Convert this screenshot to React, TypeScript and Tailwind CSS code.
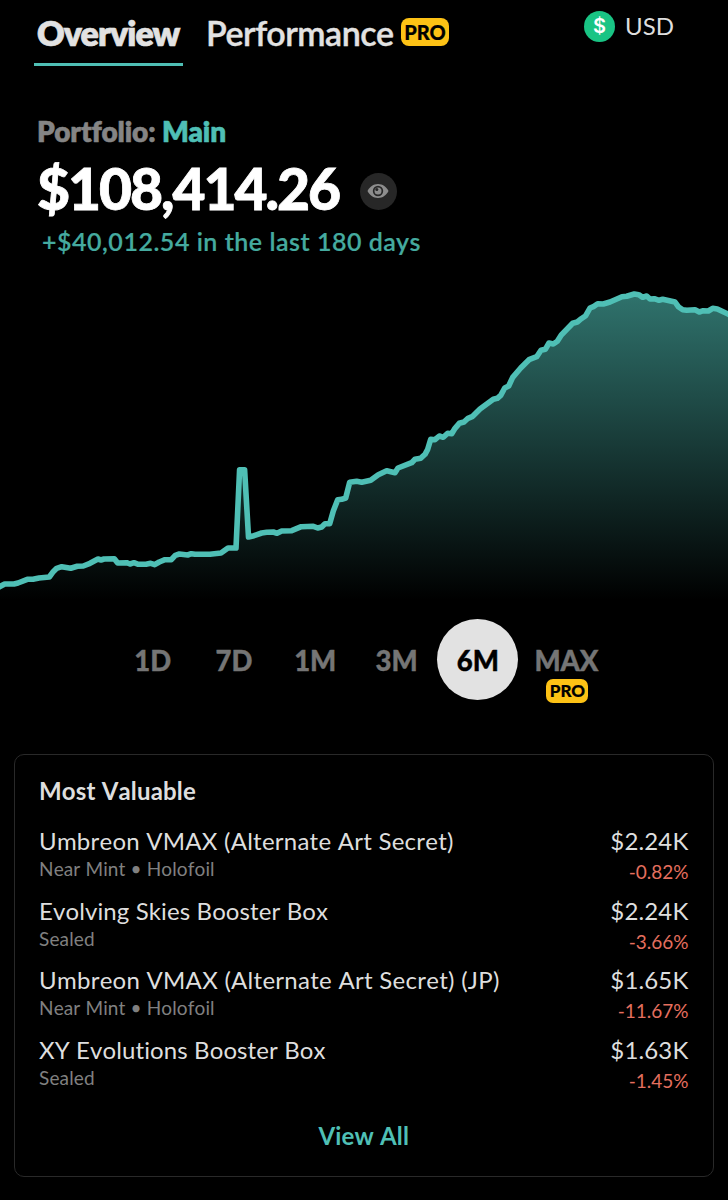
import clsx from "clsx"

type Point = [number, number]

const RANGES = ["1D", "7D", "1M", "3M", "6M", "MAX"]

const ITEMS = [
  { name: "Umbreon VMAX (Alternate Art Secret)", info: "Near Mint • Holofoil", price: "$2.24K", change: "-0.82%", spacing: "tracking-[0.240px]" },
  { name: "Evolving Skies Booster Box", info: "Sealed", price: "$2.24K", change: "-3.66%", spacing: "tracking-[0.110px]" },
  { name: "Umbreon VMAX (Alternate Art Secret) (JP)", info: "Near Mint • Holofoil", price: "$1.65K", change: "-11.67%", spacing: "tracking-[0.270px]" },
  { name: "XY Evolutions Booster Box", info: "Sealed", price: "$1.63K", change: "-1.45%", spacing: "tracking-[0.110px]" },
]

// Portfolio value over the last 180 days, in chart units
const POINTS: Point[] = [
  [-3, 308], [0, 306.5], [4.7, 304], [14, 304], [18, 303], [27.3, 299.3], [33, 299.3], [39, 298], [49.3, 297],
  [52.7, 292.3], [56.7, 288.3], [61.7, 286.7], [70.7, 288.3], [77.3, 286.3], [83.3, 286], [90, 283.3], [98, 279],
  [101, 280], [104, 279], [114.3, 278.7], [117.7, 283], [126.7, 282.7], [130, 284], [134, 282.7], [138.3, 284.3],
  [146, 284.3], [150.7, 283.3], [154.7, 284.7], [159.3, 282], [165, 279.7], [171.3, 279.7], [175.3, 275.3],
  [179.3, 274], [187.7, 275], [191.3, 273.7], [195, 274.3], [210, 274.3], [221, 273], [228, 268], [236, 268],
  [239.6, 189.7], [244.6, 189.7], [248.5, 257], [254, 255.7], [261.7, 253], [266.7, 252.3], [273.3, 252],
  [277, 253.3], [281.7, 251], [291.7, 250.7], [301.3, 246.7], [313.3, 246.3], [317.7, 248], [321.7, 247],
  [325, 243.7], [329.7, 243.7], [333.3, 231], [337.7, 219.7], [341.7, 219.3], [345.7, 218], [349.7, 202.3],
  [356.7, 201.3], [361.7, 202.3], [370.7, 200.3], [378.3, 194.7], [386.7, 190.7], [395, 192.7], [398, 188],
  [411.7, 182.7], [415, 179.3], [420.7, 178.3], [425, 174.3], [427.7, 169.3], [430.7, 159.3], [435, 159.7],
  [439.3, 156], [443.3, 157.3], [447.7, 153.3], [451.7, 153.7], [455, 148.3], [459.3, 143.3], [464, 142],
  [468, 138.3], [472.7, 136.3], [480, 129], [493.3, 119.3], [497.3, 118.3], [500.7, 115.3], [504.7, 108],
  [508.7, 106], [512.7, 97.3], [520.7, 88], [529, 79.7], [536.7, 76.7], [541, 70.3], [545.3, 69.3], [549, 63],
  [553.3, 64], [557.3, 61.3], [561.3, 55], [572.7, 43.3], [577.3, 42], [581.3, 38.7], [585.7, 35.7], [590, 28],
  [594, 26.3], [597.7, 23.7], [603.3, 24], [610, 22], [622, 16.7], [626.7, 16.3], [634.3, 14], [638.7, 14.7],
  [642.7, 17.3], [646.7, 16], [650, 19], [654.3, 18.7], [659, 20.3], [662.7, 19.3], [675, 22], [678.3, 26.7],
  [682.7, 29.7], [686.7, 30.3], [695, 29.7], [699.3, 32], [703.3, 30.7], [708.3, 31], [712.7, 28.3],
  [717.3, 29], [728, 34], [732, 36],
]

function ProBadge({ className }: { className?: string }) {
  return (
    <span
      className={clsx(
        "flex items-center justify-center bg-[#fdc215] font-black text-black [-webkit-text-stroke:0.2px_black]",
        className
      )}
    >
      PRO
    </span>
  )
}

function Header() {
  return (
    <header className="flex h-[67px] items-start justify-between pl-[34px] pr-[54px]">
      <nav className="flex pt-[13px] text-[34px] leading-10 text-[#e2e2e2]">
        <div className="h-[53px] w-[149px] border-b-[3.5px] border-[#4fbfb5] pl-[3px] font-extrabold tracking-[-0.95px] [-webkit-text-stroke:0.7px]">
          Overview
        </div>
        <div className="ml-[23px] flex">
          <span className="w-[195px] font-semibold tracking-[-0.45px] [-webkit-text-stroke:0.4px]">Performance</span>
          <ProBadge className="mt-[5px] h-[28px] w-[48px] rounded-[8px] text-[20px]" />
        </div>
      </nav>
      <div className="flex items-center gap-[10px] pt-[10px]">
        <span className="flex size-[31px] items-center justify-center rounded-full bg-[#19c484] font-['Inter',sans-serif] text-[20px] font-semibold text-white">
          $
        </span>
        <span className="text-[24px] leading-8 text-[#dedede]">USD</span>
      </div>
    </header>
  )
}

function Summary() {
  return (
    <section className="h-[213px] pl-[37px] pt-[47px]">
      <h2 className="h-[36px] text-[28px] font-extrabold leading-[34px] tracking-[-0.1px] text-[#858585] [-webkit-text-stroke:0.5px]">
        Portfolio: <span className="text-[#4fbfb5]">Main</span>
      </h2>
      <div className="flex h-[75px] items-center">
        <h1 className="w-[323px] pt-[2px] text-[57px] font-black leading-[75px] tracking-[-2.050px] text-white [-webkit-text-stroke:0.8px]">
          $108,414.26
        </h1>
        <button className="mt-[7px] flex size-[37px] items-center justify-center rounded-full bg-[#272727]">
          <svg viewBox="0 0 22 14" className="-ml-[2px] h-[14px] w-[22px]">
            <path d="M0.500 7C2.500 2.800 6.400 0 11 0S19.500 2.800 21.500 7C19.500 11.200 15.600 14 11 14S2.500 11.200 0.500 7Z" fill="#8d8d8d" />
            <circle cx="11" cy="7" r="5.200" fill="#272727" />
            <circle cx="11" cy="7" r="3.500" fill="#8d8d8d" />
            <circle cx="9.800" cy="5.600" r="1.500" fill="#272727" />
          </svg>
        </button>
      </div>
      <p className="pl-[5px] text-[25px] font-semibold leading-8 tracking-[0.520px] text-[#45aa9f] [-webkit-text-stroke:0.2px]">
        +$40,012.54 in the last 180 days
      </p>
    </section>
  )
}

function Chart() {
  const line = POINTS.map(([x, y]) => `${x},${y}`).join(" ")

  return (
    <svg viewBox="0 0 728 325" className="block h-[325px] w-full">
      <defs>
        <linearGradient id="area" gradientUnits="userSpaceOnUse" x1="0" y1="14" x2="0" y2="320">
          <stop offset="0" stopColor="#4fbfb5" stopOpacity="0.6" />
          <stop offset="1" stopColor="#4fbfb5" stopOpacity="0" />
        </linearGradient>
      </defs>
      <polygon points={`-3,325 ${line} 732,325`} fill="url(#area)" />
      <polyline points={line} fill="none" stroke="#4fbfb5" strokeWidth="5.600" strokeLinejoin="round" />
    </svg>
  )
}

function RangePicker({ active }: { active: string }) {
  return (
    <div className="ml-[112px] mt-[14px] flex h-[135px] text-[27.500px] font-black text-[#757575]">
      {RANGES.map((range) => (
        <button
          key={range}
          className={clsx(
            "relative flex h-[81px] items-center justify-center rounded-full [-webkit-text-stroke:0.4px]",
            range === "MAX" ? "ml-[7px] w-[82px]" : "w-[81.300px]",
            range === active && "bg-[#e2e2e2] text-black"
          )}
        >
          <span className="pt-[2px]">{range}</span>
          {range === "MAX" && (
            <ProBadge className="absolute left-[21px] top-[60px] h-[24px] w-[42px] rounded-[7px] text-[17px]" />
          )}
        </button>
      ))}
    </div>
  )
}

function MostValuable() {
  return (
    <section className="mx-[14px] flex h-[423px] flex-col rounded-[10px] border-[1.5px] border-[#292929] pl-[24px] pr-[24.500px] pt-[20px] text-[#dedede] [font-kerning:none]">
      <h3 className="text-[24px] font-bold leading-8 tracking-[0.170px]">Most Valuable</h3>
      <ul className="mt-[18px]">
        {ITEMS.map((item) => (
          <li key={item.name} className="flex h-[69.500px] justify-between">
            <div>
              <div className={clsx("text-[24px] leading-8", item.spacing)}>{item.name}</div>
              <div className="pt-px text-[19px] leading-[22px] tracking-[0.130px] text-[#808080]">{item.info}</div>
            </div>
            <div className="text-right">
              <div className="text-[24px] leading-8 tracking-[0.15px]">{item.price}</div>
              <div className="pt-1 text-[19px] leading-[22px] text-[#e56f5e]">{item.change}</div>
            </div>
          </li>
        ))}
      </ul>
      <button className="mt-[17px] text-[24px] font-bold leading-8 tracking-[0.170px] text-[#4fbfb5]">View All</button>
    </section>
  )
}

export default function App() {
  return (
    <main className="h-[1200px] w-[728px] overflow-hidden bg-black font-['Lato',sans-serif]">
      <Header />
      <Summary />
      <Chart />
      <RangePicker active="6M" />
      <MostValuable />
    </main>
  )
}
